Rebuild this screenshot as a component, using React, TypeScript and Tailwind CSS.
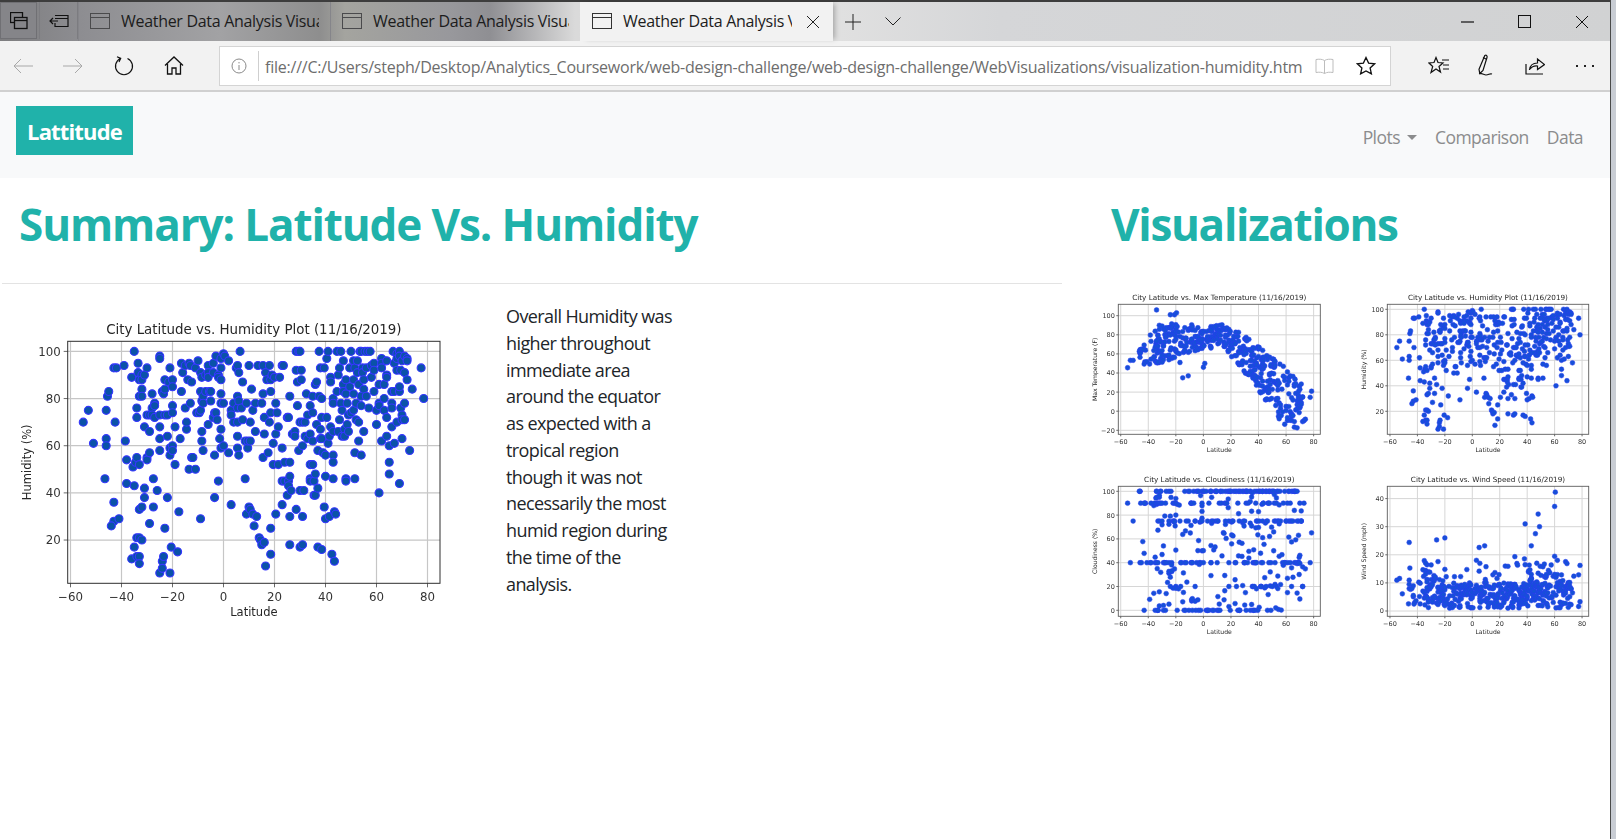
import React from "react";

// lat,humidity pairs read off the big plot
const RAW =
  "-55,70 -53,75 -51,61 -46,75 -46,63 -46,60 -46.5,46 -45.5,81 -45,83 -43,93 -42,93 -42.5,70 -43,36 -43,28 -44,26 -41,29 -39,94 -38.5,62 -38,54 -38,44 -35,100 -36,89 -35,43 -35.5,51 -34.5,53 -34,76 -34,72 -34,55 -33.5,95 -33.5,91 -33,88 -33,81 -33,52 -33,33 -32,34 -32,84 -32,81 -32,90 -32,88 -31,90 -31,68 -31,42 -31,38 -34,21 -33,21 -32,20 -35,17 -36,12 -34,13 -33,13 -33,10 -30,93 -30,73 -30,55 -30,54 -29,57 -29,73 -29,66 -29,27 -28,82 -28,76 -28,73 -27.5,46 -27.5,34 -27,78 -27,77 -27,72 -26,41 -25,98 -25,97 -25,73 -25,68 -25,63 -25,58 -25,6 -24,83 -24,11 -24,8 -23.5,13 -23.5,82 -23,88 -23,84 -23,73 -23,25 -22,38 -22,73 -22,64 -21.5,87 -21,93 -21,59 -21,56 -21,6 -20.5,17 -20,88 -20,85 -20,77 -20,74 -20,60 -20,58 -19,68 -19,52 -18,15 -17.5,32 -17,63 " +
  "-16.5,83 -16.5,95 -16,91 -15,76 -15,94 -14.5,67 -14.5,70 -14,88 -13.5,95 -13.5,50 -13,78 -13,94 -12.5,87 -12.5,55 -12,55 -11,93 -11,50 -10.5,74 -10,96 -9.5,74 -9,91 -9,83 -9,75 -9,29 -8.5,89 -8.5,79 -8.5,66 -8.5,62 -8,81 -8,58 -8,78 -7,83 -7,90 -6,94 -6,91 -6,89 -6,69 -5.5,83 -5,83 -5,79 -4,95 -4,91 -4,72 -3.5,74 -3.5,56 -3.5,38 -3,74 -3,98 -2.5,71 -2,90 -2,45 -2,89 -1.5,63 -1,59 -1,67 -1,82 -1,88 -1,93 -1,78 -1,97 0,99 0,78 0.5,98 0,60 2,57 2,96 3,75 3,73 3,35 4,70 4,78 5,93 5.5,94 5.5,81 5.5,64 5.5,59 5.5,70 5.5,76 6,91 6,79 6,56 6.5,100 7,76 7.5,87 7.5,71 8.5,62 8.5,46 9,78 9.5,59 9.5,62 9,31 10,34 10,94 10.5,33 10.5,62 10.5,70 11,84 11.5,75 11.5,31 12,26 12.5,78 12.5,66 13,30 13.5,94 14,21 14.5,20 15,78 15,18 15.5,94 15.5,55 15.5,82 16,72 16,65 16,19 16.5,91 16.5,9 17,88 17.5,57 18,94 18,70 18.5,83 18.5,88 18.5,74 18.5,25 18.5,14 19,90 19.5,52 19.5,61 20,89 20.5,78 20.5,65 20.5,31 21,74 21.5,68 21.5,52 22,89 23,94 23,59 23,45 23,35 23.5,94 24,53 24,45 25,72 25,39 25.5,72 25.5,45 25.5,43 26,53 26,81 26,47 26.5,41 26,30 26,18 27,65 28,66 28,64 28.5,92 28.5,33 28.5,100 29,87 29,77 29.5,100 29.5,58 30,100 30,70 30,41 30,17 30.5,92 30.5,88 31,60 31,70 31,30 31,18 31.5,41 32,64 32,70 32.5,82 33,73 33,63 34,65 34,77 34,52 34,46 34,45 35,74 35,81 35,62 35,52 35.5,39 35.5,45 36,86 36,48 36,39 36.5,87 36.5,69 37,58 37,42 37,17 37.5,100 37.5,81 38,93 38,67 38,63 38.5,72 38.5,80 38.5,63 38.5,16 39,57 39.5,93 39.5,34 40,56 40,29 40,47 40.5,97 40.5,72 41,100 41,61 41.5,64 41.5,30 42,89 42,68 42,87 42.5,14 43,80 43,78 43,66 43,56 43,53 43,46 43.5,32 43.5,11 44,31 44.5,100 44.5,83 45,90 45,66 45.5,93 45.5,71 46,100 46,78 46.5,75 46.5,64 47,96 47,86 47,83 47.5,67 47.5,64 48,88 48,82 48,46 48,45 48.5,69 48.5,78 49,73 49,66 49.5,85 49.5,93 50,100 50,74 51,96 51,88 51,82 51,75 51.5,93 51.5,57 51.5,46 52,71 52,78 52.5,96 52.5,91 53,86 53,70 53,62 53.5,100 54,100 54,81 54,77 54,56 54.5,93 54.5,91 55,88 55,84 55,66 55.5,100 56,81 56,93 56.5,100 57,76 57.5,100 58,94 58,89 59,95 59,92 59,83 60,75 60,69 61,86 61,78 61,77 61,40 62,97 62,95 62,93 62,62 63,86 63,80 63,75 64,96 64,90 64,89 64,72 64,64 65,60 65,53 65,48 66,83 66,78 66,76 66,68 66.5,100 67,95 67,83 67,61 68,99 68,97 68,92 68,70 69,100 69,98 69,83 69,85 69,44 69.5,92 69.5,76 70,96 70,73 70,71 70,63 71,98 71,91 71,78 71,71 72,97 72,96 72,88 73,58 74,84 77.5,93 78.5,80";

type Pt = [number, number];

const HUMIDITY: Pt[] = RAW.split(" ").map((s) => {
  const [a, b] = s.split(",");
  return [Number(a), Number(b)];
});

const rnd = (i: number, k: number) => {
  const v = Math.sin((i + 1) * 127.1 + k * 311.7) * 43758.5453;
  return v - Math.floor(v);
};

// straight-line lookup through [lat, value] stops
const lerp = (stops: Pt[], x: number) => {
  for (let i = 1; i < stops.length; i++) {
    if (x <= stops[i][0]) {
      const [a, av] = stops[i - 1];
      const [b, bv] = stops[i];
      return av + ((x - a) / (b - a)) * (bv - av);
    }
  }
  return stops[stops.length - 1][1];
};

const TEMP_TOP: Pt[] = [[-60, 46], [-45, 66], [-35, 90], [-20, 92], [0, 90], [15, 92], [25, 84], [40, 68], [50, 56], [60, 45], [70, 32], [80, 30]];
const TEMP_LOW: Pt[] = [[-60, 44], [-45, 46], [-35, 48], [-20, 56], [0, 66], [15, 66], [25, 48], [40, 22], [50, -2], [60, -16], [70, -18], [80, 5]];

const TEMPERATURE: Pt[] = HUMIDITY.map(([lat], i) => {
  const top = lerp(TEMP_TOP, lat);
  const low = lerp(TEMP_LOW, lat);
  return [lat, low + rnd(i, 1) * (top - low)];
});
TEMPERATURE.push([-34, 106], [-21, 101], [-19.5, 103], [-24, 101], [-15, 35], [-11, 37], [-17, 51], [0, 46], [1, 50]);

const CLOUD_LEVELS = [100, 100, 100, 100, 90, 90, 75, 75, 40, 40, 20, 0, 0];
const CLOUDINESS: Pt[] = HUMIDITY.map(([lat], i) => {
  if (rnd(i, 2) < 0.36) return [lat, rnd(i, 3) * 100];
  let c = CLOUD_LEVELS[Math.floor(rnd(i, 3) * CLOUD_LEVELS.length)];
  if (c === 0 && (lat < -36 || lat > 50)) c = 90;
  if (c === 20 && lat > 0 && lat < 10) c = 75;
  return [lat, c];
});

const WIND: Pt[] = HUMIDITY.map(([lat], i) => {
  let v = 1 + 8.5 * rnd(i, 5);
  if (rnd(i, 7) > (lat > 40 || lat < -25 ? 0.45 : 0.8)) v += 11 * rnd(i, 8);
  return [lat, v];
});
WIND.push([60.5, 42.3], [60, 37.2], [48, 34.5], [38.5, 31], [49, 30], [46, 27.5], [43, 23.2], [-20, 26], [-26, 25.3], [-46, 24.4], [5, 22.6], [9, 23.2], [78.5, 3.3], [77.5, 1.6]);

interface PlotProps {
  view: [number, number, number, number];
  box: { l: number; r: number; t: number; b: number };
  x0: number; // page x of lat 0
  xs: number; // px per degree
  y0: number; // page y of value 0
  ys: number; // px per unit
  yTicks: number[];
  title: string;
  ylabel: string;
  points: Pt[];
  dot: number;
  big?: boolean;
  className: string;
}

function Plot({ view, box, x0, xs, y0, ys, yTicks, title, ylabel, points, dot, big, className }: PlotProps) {
  const X = (v: number) => x0 + v * xs;
  const Y = (v: number) => y0 - v * ys;
  const xTicks = [-60, -40, -20, 0, 20, 40, 60, 80];
  const tick = big ? 11.8 : 6.5;
  const label = big ? 11.5 : 6.1;
  const midX = (box.l + box.r) / 2;
  const midY = (box.t + box.b) / 2;
  const fmt = (n: number) => (n < 0 ? `\u2212${-n}` : `${n}`);

  return (
    <svg
      viewBox={view.join(" ")}
      width={view[2]}
      height={view[3]}
      className={className}
      style={{ fontFamily: '"DejaVu Sans", sans-serif' }}
    >
      {xTicks.map((t) => (
        <g key={t}>
          <line x1={X(t)} x2={X(t)} y1={box.t} y2={box.b} stroke={big ? "#c6c6c6" : "#d6d6d6"} strokeWidth={big ? 1.2 : 1} />
          <line x1={X(t)} x2={X(t)} y1={box.b} y2={box.b + (big ? 4 : 2)} stroke="#444" strokeWidth={0.8} />
          <text x={X(t)} y={box.b + (big ? 18 : 9.4)} fontSize={tick} textAnchor="middle" fill="#333">
            {fmt(t)}
          </text>
        </g>
      ))}
      {yTicks.map((t) => (
        <g key={t}>
          <line x1={box.l} x2={box.r} y1={Y(t)} y2={Y(t)} stroke={big ? "#c6c6c6" : "#d6d6d6"} strokeWidth={big ? 1.2 : 1} />
          <line x1={box.l - (big ? 4 : 2)} x2={box.l} y1={Y(t)} y2={Y(t)} stroke="#444" strokeWidth={0.8} />
          <text x={box.l - (big ? 7 : 3.5)} y={Y(t) + (big ? 4.4 : 2.4)} fontSize={tick} textAnchor="end" fill="#333">
            {fmt(t)}
          </text>
        </g>
      ))}
      {points.map(([a, b], i) => (
        <circle
          key={i}
          cx={X(a)}
          cy={Y(b)}
          r={dot}
          fill={big ? "#0a52a8" : "#1650d8"}
          stroke={big ? "#3636ff" : "#2a3cf0"}
          strokeWidth={big ? 1.1 : 0.5}
        />
      ))}
      <rect x={box.l} y={box.t} width={box.r - box.l} height={box.b - box.t} fill="none" stroke={big ? "#2e2e2e" : "#5c5c5c"} strokeWidth={big ? 1 : 0.9} />
      <text x={midX} y={box.t - (big ? 7 : 4)} fontSize={big ? 13.4 : 7.25} textAnchor="middle" fill="#262626">
        {title}
      </text>
      <text x={midX} y={box.b + (big ? 33 : 17.6)} fontSize={label} textAnchor="middle" fill="#262626">
        Latitude
      </text>
      <text
        transform={`translate(${box.l - (big ? 37 : 21)} ${midY}) rotate(-90)`}
        fontSize={label}
        textAnchor="middle"
        fill="#262626"
      >
        {ylabel}
      </text>
    </svg>
  );
}

function Glyph({ w = 20, h = 20, className = "", children }: { w?: number; h?: number; className?: string; children: React.ReactNode }) {
  return (
    <svg width={w} height={h} viewBox={`0 0 ${w} ${h}`} fill="none" stroke="currentColor" strokeWidth={1} className={className}>
      {children}
    </svg>
  );
}

function TabIcon({ className }: { className: string }) {
  return (
    <Glyph w={20} h={17} className={`shrink-0 ${className}`}>
      <rect x="0.5" y="0.5" width="19" height="15" />
      <line x1="0.5" y1="4.5" x2="19.5" y2="4.5" />
    </Glyph>
  );
}

function Tab({ width, title, textWidth, active }: { width: string; title: string; textWidth: string; active?: boolean }) {
  return (
    <div className={`flex h-[39px] items-center ${width} ${active ? "bg-[#f2f2f2] pl-3 shadow-[4px_0_5px_-2px_rgba(0,0,0,0.25)]" : "border-l border-[#85858a] pl-[11px]"}`}>
      <TabIcon className={active ? "text-[#333]" : "text-[#4a4a4c]"} />
      <span className={`mb-[2px] ml-[11px] overflow-hidden whitespace-nowrap text-[16px] leading-[20px] tracking-[-0.3px] text-[#1c1c1c] ${textWidth}`}>{title}</span>
      {active && (
        <Glyph w={14} h={14} className="ml-[14px] text-[#222]">
          <path d="M1 1l12 12M13 1L1 13" />
        </Glyph>
      )}
    </div>
  );
}

function TabBar() {
  return (
    <div className="flex h-[41px] border-t-2 border-[#3d3d3d] bg-[linear-gradient(90deg,#7d7d7f_0,#8d8d91_80px,#a2a2a4_220px,#8e8e8e_320px,#a4a49f_345px,#98989c_450px,#8f8f93_490px,#dadada_575px,#e0e0e0_840px,#d5d6d8_1000px,#d1d2d3_1611px)] font-['Open_Sans',sans-serif]">
      <div className="flex h-[37px] w-[37px] items-center justify-center border border-[#707074] bg-[#858589] text-[#111]">
        <Glyph w={18} h={18}>
          <rect x="0.5" y="0.5" width="12" height="10" strokeWidth="1.3" />
          <rect x="4.5" y="5.5" width="12.5" height="11" fill="#858589" strokeWidth="1.3" />
          <line x1="4.5" y1="8.5" x2="17" y2="8.5" strokeWidth="1.3" />
        </Glyph>
      </div>
      <div className="ml-[2px] flex h-[37px] w-[39px] items-center justify-center border-x border-[#7c7c80] text-[#111]">
        <Glyph w={20} h={14}>
          <path d="M6 1.5h13v11H6V9M6 4.5h13M9 7H1M4 4L1 7l3 3" strokeWidth="1.2" />
        </Glyph>
      </div>
      <Tab width="w-[252px]" title="Weather Data Analysis Visualization" textWidth="w-[198px]" />
      <Tab width="w-[250px]" title="Weather Data Analysis Visualization" textWidth="w-[196px]" />
      <Tab width="w-[253px]" title="Weather Data Analysis Visualization" textWidth="w-[169px]" active />
      <div className="ml-3 flex h-[39px] items-center text-[#222]">
        <Glyph w={16} h={16}>
          <path d="M8 0v16M0 8h16" />
        </Glyph>
        <Glyph w={16} h={9} className="ml-[24px]">
          <path d="M0.5 0.5L8 8l7.5-7.5" />
        </Glyph>
      </div>
      <div className="ml-auto flex h-[39px] items-center pr-[21px] text-[#111]">
        <Glyph w={13} h={2}>
          <line x1="0" y1="1" x2="13" y2="1" strokeWidth="1.2" />
        </Glyph>
        <Glyph w={13} h={13} className="ml-[44px]">
          <rect x="0.5" y="0.5" width="12" height="12" />
        </Glyph>
        <Glyph w={14} h={14} className="ml-[44px]">
          <path d="M1 1l12 12M13 1L1 13" />
        </Glyph>
      </div>
    </div>
  );
}

function Toolbar() {
  return (
    <div className="flex h-[51px] items-center border-b-2 border-[#d0d0d0] bg-[#f2f2f2] font-['Open_Sans',sans-serif]">
      <Glyph w={20} h={16} className="ml-[13px] text-[#a8a8a8]">
        <path d="M20 8H1M8 1L1 8l7 7" />
      </Glyph>
      <Glyph w={20} h={16} className="ml-[30px] text-[#a8a8a8]">
        <path d="M0 8h19M12 1l7 7-7 7" />
      </Glyph>
      <Glyph w={20} h={20} className="ml-[31px] text-[#111]">
        <path d="M6.500 2.500A8.500 8.500 0 1 0 13.500 2.500M3 0.800L6.700 2.400 5 6" strokeWidth="1.2" />
      </Glyph>
      <Glyph w={20} h={19} className="ml-[30px] text-[#111]">
        <path d="M1 9.500L10 1l9 8.500M3.500 8v10h4.500v-6h4v6h4.500V8" strokeWidth="1.3" />
      </Glyph>
      <div className="ml-[35px] flex h-[40px] w-[1172px] items-center border border-[#d4d4d4] bg-white text-[#777]">
        <Glyph w={16} h={16} className="ml-[11px] text-[#8a8a8a]">
          <circle cx="8" cy="8" r="7" />
          <path d="M8 7v5M8 4v1.400" />
        </Glyph>
        <div className="ml-[11px] h-[30px] w-px bg-[#cfcfcf]" />
        <span className="ml-[6px] mt-[3px] w-[1041px] whitespace-nowrap text-[16px] leading-[20px] tracking-[-0.23px] text-[#6d6d6d]">
          file:///C:/Users/steph/Desktop/Analytics_Coursework/web-design-challenge/web-design-challenge/WebVisualizations/visualization-humidity.htm
        </span>
        <Glyph w={19} h={16} className="ml-[9px] text-[#bdbdbd]">
          <path d="M9.500 2.500C7 1 4 1 1 1.500v13c3-.5 6-.5 8.500 1 2.500-1.500 5.500-1.500 8.500-1v-13c-3-.5-6-.5-8.500 1zM9.500 2.500v13" />
        </Glyph>
        <Glyph w={20} h={19} className="ml-[22px] text-[#111]">
          <path d="M10 1.500l2.600 5.600 6 .7-4.500 4.100 1.300 6L10 15l-5.400 2.900 1.300-6L1.400 7.800l6-.7z" strokeWidth="1.3" />
        </Glyph>
      </div>
      <Glyph w={21} h={19} className="ml-[37px] text-[#111]">
        <path d="M8 1.500L10 6.500 15 7 11 10.500 12.500 16 8 13 3 16.500 4.700 10.500 1 7l5-.5zM14 4h7M15 9h6M15 13h6" strokeWidth="1.2" />
      </Glyph>
      <Glyph w={20} h={24} className="ml-[27px] text-[#111]">
        <path d="M8.800 1.500c1.600-.8 2.700.3 2.200 2L7 16.500l-3.200 3-.8-4.300zM7 3.500l3 1.500M3 19.500c3-.5 5 1.500 7 1.500 3 0 3.500-2 6-1" strokeWidth="1.2" />
      </Glyph>
      <Glyph w={20} h={19} className="ml-[29px] text-[#111]">
        <path d="M1 8v10h17M4.500 14c.5-5 4-7 8-7V3l7 5.500-7 5v-3.500c-3.500-.5-6 1-8 3.500z" strokeWidth="1.2" />
      </Glyph>
      <div className="ml-[31px] flex gap-[6px]">
        <div className="size-[2px] bg-[#222]" />
        <div className="size-[2px] bg-[#222]" />
        <div className="size-[2px] bg-[#222]" />
      </div>
    </div>
  );
}

function Navbar() {
  return (
    <nav className="flex h-[86px] items-start justify-between bg-[#f8f9fa] pl-4 pr-[27px] pt-[14px] font-['Open_Sans',sans-serif]">
      <a className="flex h-[49px] w-[117px] items-center justify-center bg-[#20b2aa] pt-[2px] text-[22px] font-bold tracking-[-0.85px] text-white">Lattitude</a>
      <div className="mt-[18px] flex items-center text-[17.5px] leading-[26px] tracking-[-0.55px] text-[#8b8c8d]">
        <span>Plots</span>
        <span className="ml-[7px] h-0 w-0 border-x-[5px] border-t-[5px] border-x-transparent border-t-[#8b8c8d]" />
        <span className="ml-[18px]">Comparison</span>
        <span className="ml-[18px]">Data</span>
      </div>
    </nav>
  );
}

const PARAGRAPH = [
  "Overall Humidity was",
  "higher throughout",
  "immediate area",
  "around the equator",
  "as expected with a",
  "tropical region",
  "though it was not",
  "necessarily the most",
  "humid region during",
  "the time of the",
  "analysis.",
];

const SMALL_BOX = { l: 1118.3, r: 1320.3, t: 304.3, b: 434.3 };

export default function App() {
  return (
    <div className="flex h-[839px] w-[1616px] overflow-hidden bg-white">
      <div className="w-[1611px] border-r border-[#4a4a4a]">
        <TabBar />
        <Toolbar />
        <Navbar />
        <main className="flex font-['Open_Sans',sans-serif]">
          <section className="w-[1062px]">
            <h1 className="h-[105px] pl-[19px] pt-[12px] text-[44px] font-bold leading-[68px] tracking-[-1.1px] text-[#20b2aa]">Summary: Latitude Vs. Humidity</h1>
            <div className="ml-[2px] h-px bg-[#e3e3e3]" />
            <div className="flex">
              <Plot
                view={[20, 318, 440, 310]}
                box={{ l: 67.7, r: 440, t: 341.3, b: 583.3 }}
                x0={223.5}
                xs={2.55}
                y0={587.2}
                ys={2.358}
                yTicks={[20, 40, 60, 80, 100]}
                title="City Latitude vs. Humidity Plot (11/16/2019)"
                ylabel="Humidity (%)"
                points={HUMIDITY}
                dot={4}
                big
                className="ml-5 mt-[34px] shrink-0 blur-[0.3px]"
              />
              <div className="ml-[46px] mt-[19px] text-[18px] leading-[26.75px] tracking-[-0.6px] text-[#212529]">
                {PARAGRAPH.map((line) => (
                  <div key={line}>{line}</div>
                ))}
              </div>
            </div>
          </section>
          <section className="flex-1">
            <h1 className="h-[110px] pl-[49px] pt-[12px] text-[44px] font-bold leading-[68px] tracking-[-1.3px] text-[#20b2aa]">Visualizations</h1>
            <div className="ml-[28px] grid w-[510px] grid-cols-[240px_240px] gap-x-[28.7px] gap-y-[12px]">
              <Plot
                view={[1090, 288, 240, 170]}
                box={SMALL_BOX}
                x0={1203.4}
                xs={1.378}
                y0={411.2}
                ys={0.955}
                yTicks={[-20, 0, 20, 40, 60, 80, 100]}
                title="City Latitude vs. Max Temperature (11/16/2019)"
                ylabel="Max Temperature (F)"
                points={TEMPERATURE}
                dot={2.4}
                className="blur-[0.5px]"
              />
              <Plot
                view={[1358.7, 288, 240, 170]}
                box={{ l: 1387, r: 1588.4, t: 304.3, b: 434.3 }}
                x0={1472}
                xs={1.372}
                y0={436.8}
                ys={1.275}
                yTicks={[20, 40, 60, 80, 100]}
                title="City Latitude vs. Humidity Plot (11/16/2019)"
                ylabel="Humidity (%)"
                points={HUMIDITY}
                dot={2.4}
                className="blur-[0.5px]"
              />
              <Plot
                view={[1090, 470, 240, 170]}
                box={{ l: 1118.3, r: 1320.3, t: 486.3, b: 616.3 }}
                x0={1203.4}
                xs={1.378}
                y0={610.3}
                ys={1.19}
                yTicks={[0, 20, 40, 60, 80, 100]}
                title="City Latitude vs. Cloudiness (11/16/2019)"
                ylabel="Cloudiness (%)"
                points={CLOUDINESS}
                dot={2.4}
                className="blur-[0.5px]"
              />
              <Plot
                view={[1358.7, 470, 240, 170]}
                box={{ l: 1387, r: 1588.4, t: 486.3, b: 616.3 }}
                x0={1472}
                xs={1.372}
                y0={611}
                ys={2.81}
                yTicks={[0, 10, 20, 30, 40]}
                title="City Latitude vs. Wind Speed (11/16/2019)"
                ylabel="Wind Speed (mph)"
                points={WIND}
                dot={2.4}
                className="blur-[0.5px]"
              />
            </div>
          </section>
        </main>
      </div>
      <div className="flex-1 bg-[#c9cdd4]" />
    </div>
  );
}
